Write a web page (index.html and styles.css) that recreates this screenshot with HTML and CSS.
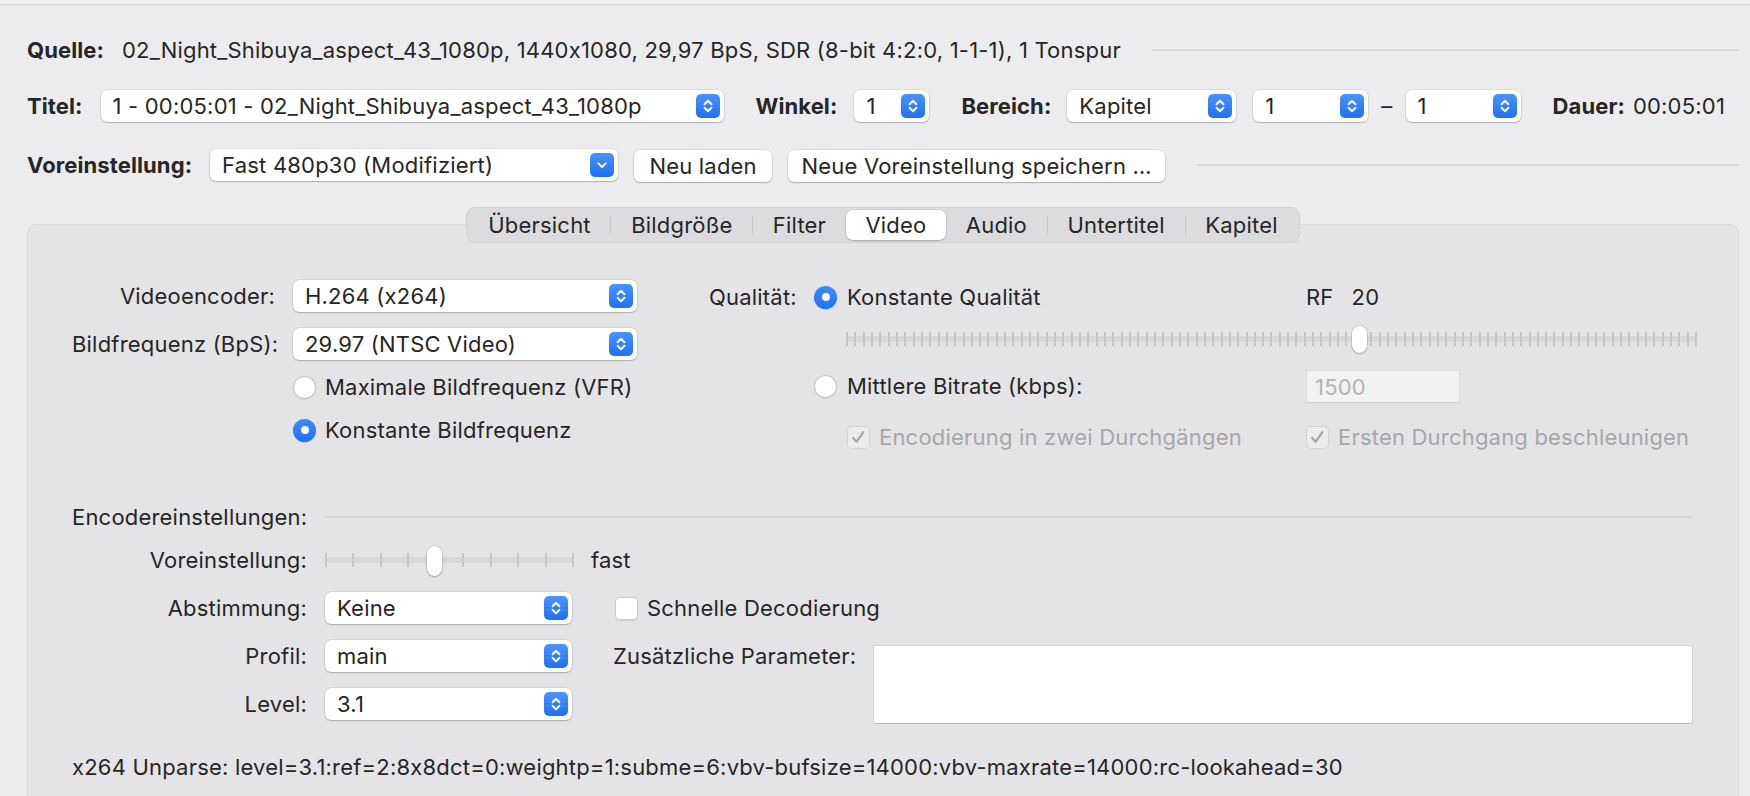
FILE: index.html
```html
<!DOCTYPE html>
<html lang="de">
<head>
<meta charset="utf-8">
<title>HandBrake – Video</title>
<link rel="stylesheet" href="styles.css">
</head>
<body>
<div class="topbar"></div>
<header class="header">
  <div class="row row-source">
    <span class="lbl-b">Quelle:</span>
    <span class="src-val">02_Night_Shibuya_aspect_43_1080p, 1440x1080, 29,97 BpS, SDR (8-bit 4:2:0, 1-1-1), 1 Tonspur</span>
    <span class="rule rule-source"></span>
  </div>
  <div class="row row-title">
    <span class="lbl-b">Titel:</span>
    <div class="popup w-title"><span class="ptxt">1 - 00:05:01 - 02_Night_Shibuya_aspect_43_1080p</span><span class="stepper"><svg viewBox="0 0 24 24"><path d="M8.5 10.2 L12 6.8 L15.5 10.2 M8.5 13.8 L12 17.2 L15.5 13.8"/></svg></span></div>
    <span class="lbl-b ml-winkel">Winkel:</span>
    <div class="popup w-angle"><span class="ptxt">1</span><span class="stepper"><svg viewBox="0 0 24 24"><path d="M8.5 10.2 L12 6.8 L15.5 10.2 M8.5 13.8 L12 17.2 L15.5 13.8"/></svg></span></div>
    <span class="lbl-b ml-bereich">Bereich:</span>
    <div class="popup w-range"><span class="ptxt">Kapitel</span><span class="stepper"><svg viewBox="0 0 24 24"><path d="M8.5 10.2 L12 6.8 L15.5 10.2 M8.5 13.8 L12 17.2 L15.5 13.8"/></svg></span></div>
    <div class="popup w-chap ml-chap1"><span class="ptxt">1</span><span class="stepper"><svg viewBox="0 0 24 24"><path d="M8.5 10.2 L12 6.8 L15.5 10.2 M8.5 13.8 L12 17.2 L15.5 13.8"/></svg></span></div>
    <span class="dash">–</span>
    <div class="popup w-chap"><span class="ptxt">1</span><span class="stepper"><svg viewBox="0 0 24 24"><path d="M8.5 10.2 L12 6.8 L15.5 10.2 M8.5 13.8 L12 17.2 L15.5 13.8"/></svg></span></div>
    <span class="lbl-b ml-dauer">Dauer:</span>
    <span class="dauer-val">00:05:01</span>
  </div>
  <div class="row row-preset">
    <span class="lbl-b">Voreinstellung:</span>
    <div class="popup w-preset"><span class="ptxt">Fast 480p30 (Modifiziert)</span><span class="stepper"><svg viewBox="0 0 24 24"><path d="M8.3 10.3 L12 14 L15.7 10.3"/></svg></span></div>
    <button class="btn btn-reload">Neu laden</button>
    <button class="btn btn-save">Neue Voreinstellung speichern …</button>
    <span class="rule rule-preset"></span>
  </div>
</header>

<section class="tabview">
  <nav class="tabs">
    <span class="tab">Übersicht</span><span class="sep"></span>
    <span class="tab">Bildgröße</span><span class="sep"></span>
    <span class="tab">Filter</span>
    <span class="tab active">Video</span>
    <span class="tab">Audio</span><span class="sep"></span>
    <span class="tab">Untertitel</span><span class="sep"></span>
    <span class="tab">Kapitel</span>
  </nav>
  <div class="tabbox">
    <div class="top-section">
      <div class="left-col">
        <div class="frow">
          <span class="flabel">Videoencoder:</span>
          <div class="popup w-left"><span class="ptxt">H.264 (x264)</span><span class="stepper"><svg viewBox="0 0 24 24"><path d="M8.5 10.2 L12 6.8 L15.5 10.2 M8.5 13.8 L12 17.2 L15.5 13.8"/></svg></span></div>
        </div>
        <div class="frow mt16">
          <span class="flabel">Bildfrequenz (BpS):</span>
          <div class="popup w-left"><span class="ptxt">29.97 (NTSC Video)</span><span class="stepper"><svg viewBox="0 0 24 24"><path d="M8.5 10.2 L12 6.8 L15.5 10.2 M8.5 13.8 L12 17.2 L15.5 13.8"/></svg></span></div>
        </div>
        <div class="frow mt11">
          <span class="flabel"></span>
          <span class="radio"></span><span class="rtext">Maximale Bildfrequenz (VFR)</span>
        </div>
        <div class="frow mt11">
          <span class="flabel"></span>
          <span class="radio on"></span><span class="rtext">Konstante Bildfrequenz</span>
        </div>
      </div>
      <div class="right-col">
        <div class="qrow q1">
          <span class="qlabel">Qualität:</span>
          <span class="qradio"><span class="radio on"></span></span>
          <div class="qcontent">
            <span class="qa">Konstante Qualität</span>
            <span class="qb"><span class="rf">RF</span><span class="rfval">20</span></span>
          </div>
        </div>
        <div class="qrow q2">
          <span class="qlabel"></span>
          <span class="qradio"></span>
          <div class="qcontent">
            <div class="slider rf-slider"><span class="thumb rf-thumb"></span></div>
          </div>
        </div>
        <div class="qrow q3">
          <span class="qlabel"></span>
          <span class="qradio"><span class="radio"></span></span>
          <div class="qcontent">
            <span class="qa">Mittlere Bitrate (kbps):</span>
            <span class="qb"><span class="field">1500</span></span>
          </div>
        </div>
        <div class="qrow q4">
          <span class="qlabel"></span>
          <span class="qradio"></span>
          <div class="qcontent">
            <span class="qa"><span class="check dis"><svg viewBox="0 0 24 24"><path d="M6.5 12.5 L10 16.5 L17 6.5"/></svg></span><span class="dtext">Encodierung in zwei Durchgängen</span></span>
            <span class="qb"><span class="check dis"><svg viewBox="0 0 24 24"><path d="M6.5 12.5 L10 16.5 L17 6.5"/></svg></span><span class="dtext">Ersten Durchgang beschleunigen</span></span>
          </div>
        </div>
      </div>
    </div>

    <div class="enc-head">
      <span>Encodereinstellungen:</span>
      <span class="rule rule-enc"></span>
    </div>

    <div class="enc-grid">
      <span class="elabel">Voreinstellung:</span>
      <div class="slider preset-slider"><span class="thumb preset-thumb"></span></div>
      <span class="fast">fast</span>

      <span class="elabel">Abstimmung:</span>
      <div class="popup"><span class="ptxt">Keine</span><span class="stepper"><svg viewBox="0 0 24 24"><path d="M8.5 10.2 L12 6.8 L15.5 10.2 M8.5 13.8 L12 17.2 L15.5 13.8"/></svg></span></div>
      <span class="echeck"><span class="check"></span><span class="ctext">Schnelle Decodierung</span></span>

      <span class="elabel">Profil:</span>
      <div class="popup"><span class="ptxt">main</span><span class="stepper"><svg viewBox="0 0 24 24"><path d="M8.5 10.2 L12 6.8 L15.5 10.2 M8.5 13.8 L12 17.2 L15.5 13.8"/></svg></span></div>
      <div class="extra">
        <span class="extra-label">Zusätzliche Parameter:</span>
        <div class="textarea"></div>
      </div>

      <span class="elabel">Level:</span>
      <div class="popup"><span class="ptxt">3.1</span><span class="stepper"><svg viewBox="0 0 24 24"><path d="M8.5 10.2 L12 6.8 L15.5 10.2 M8.5 13.8 L12 17.2 L15.5 13.8"/></svg></span></div>
    </div>

    <div class="unparse">x264 Unparse: level=3.1:ref=2:8x8dct=0:weightp=1:subme=6:vbv-bufsize=14000:vbv-maxrate=14000:rc-lookahead=30</div>
  </div>
</section>
</body>
</html>
```

FILE: styles.css
```css
* { box-sizing: border-box; }
html, body { margin: 0; padding: 0; }
body {
  width: 1750px;
  height: 796px;
  overflow: hidden;
  background: #ececee;
  font-family: Inter, "Noto Sans", sans-serif;
  font-size: 22px;
  letter-spacing: 0.2px;
  font-feature-settings: "calt" 0;
  color: #262626;
}

.topbar {
  height: 5px;
  border-bottom: 1px solid #d3d3d5;
  background: #efeff1;
}

.header { padding: 0 11px 0 27px; }

.row { display: flex; align-items: center; }
.lbl-b { font-weight: 700; white-space: nowrap; letter-spacing: 0.1px; }

.row-source { margin-top: 33px; height: 24px; }
.src-val { margin-left: 18px; white-space: nowrap; }
.rule { height: 2px; background: #d8d8da; flex: 1; }
.rule-source { margin-left: 31px; }

.row-title { margin-top: 28px; height: 32px; }
.row-title .popup, .row-preset .popup { flex: none; }
.w-title { width: 623px; margin-left: 18px; }
.ml-winkel { margin-left: 32px; }
.w-angle { width: 75px; margin-left: 17px; }
.ml-bereich { margin-left: 32px; }
.w-range { width: 169px; margin-left: 16px; }
.w-chap { width: 115px; }
.ml-chap1 { margin-left: 17px; }
.dash { margin: 0 13px; }
.ml-dauer { margin-left: 32px; }
.dauer-val { margin-left: 8px; white-space: nowrap; }

.row-preset { margin-top: 26px; height: 34px; }
.w-preset { width: 408px; margin-left: 18px; }
.btn {
  font: inherit;
  letter-spacing: inherit;
  font-feature-settings: inherit;
  color: inherit;
  height: 32px;
  background: #fff;
  border: none;
  border-radius: 6px;
  box-shadow: 0 0 0 0.5px rgba(0,0,0,0.12), 0 1px 1.5px rgba(0,0,0,0.22);
  padding: 0 12px;
  white-space: nowrap;
  margin-top: 2px;
}
.btn-reload { width: 138px; margin-left: 16px; }
.btn-save { width: 377px; margin-left: 16px; }
.rule-preset { margin-left: 32px; }

/* Popup button */
.popup {
  display: flex;
  align-items: center;
  height: 32px;
  background: #fff;
  border-radius: 6px;
  box-shadow: 0 0 0 0.5px rgba(0,0,0,0.12), 0 1px 1.5px rgba(0,0,0,0.22);
  padding: 0 4px 0 12px;
}
.ptxt { flex: 1; white-space: nowrap; overflow: hidden; }
.stepper {
  flex: none;
  width: 24px;
  height: 24px;
  border-radius: 5px;
  background: linear-gradient(#4b93f9, #1f71f4);
  display: flex;
}
.stepper svg { width: 24px; height: 24px; }
.stepper path { fill: none; stroke: #fff; stroke-width: 1.9; stroke-linecap: round; stroke-linejoin: round; }

/* Tab view */
.tabview { margin-top: 25px; display: flex; flex-direction: column; }
.tabs {
  position: relative;
  z-index: 1;
  align-self: center;
  display: flex;
  align-items: center;
  height: 36px;
  padding: 2px;
  background: #dcdcde;
  border: 1px solid #d2d2d4;
  border-radius: 9px;
  margin-left: 16px;
}
.tab { padding: 0 19.7px; line-height: 30px; height: 30px; white-space: nowrap; }
.tab.active {
  background: #fff;
  border-radius: 7px;
  box-shadow: 0 0 0 0.5px rgba(0,0,0,0.1), 0 1px 2px rgba(0,0,0,0.2);
}
.sep { width: 1px; height: 18px; background: #c5c5c7; }

.tabbox {
  margin: -19px 11px 0 27px;
  height: 600px;
  background: #e4e4e6;
  border: 1px solid #d9d9db;
  border-radius: 9px;
  padding: 55px 45px 0 44px;
}

.top-section { display: flex; align-items: flex-start; }
.left-col { display: flex; flex-direction: column; }
.frow { display: flex; align-items: center; height: 32px; }
.mt16 { margin-top: 16px; }
.mt11 { margin-top: 11px; }
.flabel { width: 203px; margin-right: 18px; text-align: right; white-space: nowrap; }
.w-left { width: 344px; }
.rtext { margin-left: 9px; white-space: nowrap; }

.radio {
  display: inline-block;
  flex: none;
  width: 23px;
  height: 23px;
  border-radius: 50%;
  background: #fff;
  box-shadow: inset 0 0 0 1px #c4c4c6, 0 0.5px 1px rgba(0,0,0,0.12);
  position: relative;
}
.radio.on {
  background: linear-gradient(#3f8bf8, #1f71f4);
  box-shadow: 0 0.5px 1px rgba(0,0,0,0.18);
}
.radio.on::after {
  content: "";
  position: absolute;
  left: 7.5px;
  top: 7.5px;
  width: 8px;
  height: 8px;
  border-radius: 50%;
  background: #fff;
}

.right-col { margin-left: 72px; display: flex; flex-direction: column; }
.qrow { display: grid; grid-template-columns: 105px 33px 860px; align-items: center; }
.q1 { height: 34px; }
.q2 { height: 28px; margin-top: 11px; }
.q3 { height: 34px; margin-top: 16px; }
.q4 { height: 34px; margin-top: 17px; }
.qlabel { white-space: nowrap; }
.qradio { display: flex; align-items: center; }
.qcontent { display: flex; align-items: center; }
.qa { width: 459px; display: flex; align-items: center; white-space: nowrap; }
.qb { display: flex; align-items: center; white-space: nowrap; }
.rfval { margin-left: 18px; }

.field {
  width: 154px;
  height: 33px;
  line-height: 33px;
  padding-left: 8px;
  background: #f1f2f2;
  border: 1px solid #dadadc;
  border-bottom-color: #cfcfd1;
  color: #b4b4b6;
}

.check {
  flex: none;
  display: inline-flex;
  width: 23px;
  height: 23px;
  border-radius: 5px;
  background: #fff;
  box-shadow: inset 0 0 0 1px #c8c8ca, 0 0.5px 1px rgba(0,0,0,0.1);
}
.check.dis { background: #ececee; box-shadow: inset 0 0 0 1px #d3d3d5; }
.check svg { width: 23px; height: 23px; }
.check path { fill: none; stroke: #a9a9ab; stroke-width: 2.4; stroke-linecap: round; stroke-linejoin: round; }
.dtext { margin-left: 9px; color: #a7a7a9; }

/* Sliders */
.slider { position: relative; height: 28px; margin-left: -1px; }
.slider::before {
  content: "";
  position: absolute;
  left: 0; right: 0;
  top: 11px;
  height: 6px;
  background: #d8d8da;
  border-radius: 1px;
}
.slider::after {
  content: "";
  position: absolute;
  left: 0; right: 0;
  top: 7px;
  height: 14px;
}
.rf-slider { width: 851px; }
.rf-slider::after {
  background: repeating-linear-gradient(to right, #c6c6c8 0 2px, transparent 2px 8.3235px);
}
.preset-slider { width: 249px; margin-left: 0; }
.preset-slider::after {
  background: repeating-linear-gradient(to right, #c6c6c8 0 2px, transparent 2px 27.444px);
}
.thumb {
  position: absolute;
  z-index: 1;
  top: 1px;
  width: 15px;
  height: 27px;
  border-radius: 8px;
  background: #fff;
  box-shadow: 0 0 0 0.5px rgba(0,0,0,0.14), 0 1px 2px rgba(0,0,0,0.25);
}
.rf-thumb { left: 506px; }
.preset-thumb { left: 102px; top: 0; height: 30px; }

/* Encoder settings */
.enc-head { display: flex; align-items: center; height: 24px; margin-top: 51px; }
.rule-enc { margin-left: 17px; }

.enc-grid {
  margin-top: 15px;
  display: grid;
  grid-template-columns: 235px 247px 1fr;
  grid-template-rows: 32px 32px 32px 32px;
  column-gap: 18px;
  row-gap: 16px;
  align-items: center;
}
.elabel { text-align: right; white-space: nowrap; }
.fast { margin-left: 1px; }
.echeck { display: flex; align-items: center; padding-left: 25px; }
.ctext { margin-left: 9px; white-space: nowrap; }
.extra {
  grid-column: 3;
  grid-row: 3 / span 2;
  align-self: stretch;
  display: flex;
  align-items: flex-start;
  padding-left: 23px;
}
.extra-label { line-height: 32px; white-space: nowrap; width: 260px; }
.textarea {
  flex: 1;
  margin-top: 5px;
  height: 79px;
  background: #fff;
  border: 1px solid #d2d2d4;
  border-bottom-color: #b9b9bb;
}

.unparse { margin-top: 35px; line-height: 24px; white-space: nowrap; }
```
